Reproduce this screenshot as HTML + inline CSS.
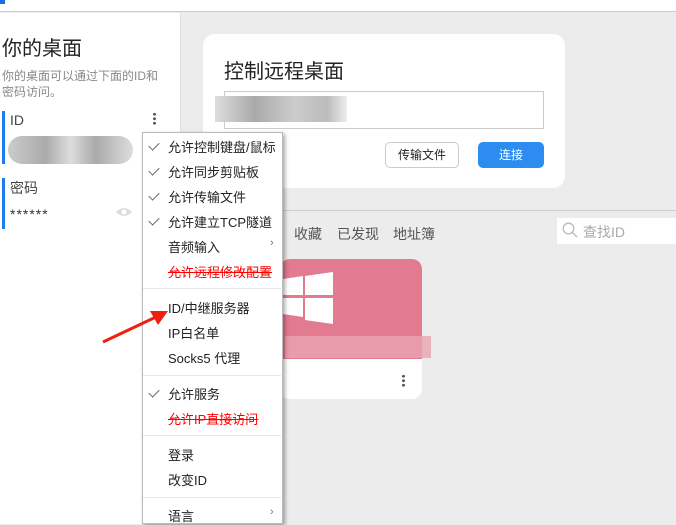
<html><head><style>
body{margin:0;width:676px;height:524px;overflow:hidden;background:#ececec;font-family:"Liberation Sans","Noto Sans CJK SC",sans-serif;position:relative}
div{position:absolute;box-sizing:border-box}
.t{white-space:nowrap}
.mi{left:25px;font-size:13px;color:#222}
.ck{left:6px;width:10px;height:6px;border-left:1.3px solid #666;border-bottom:1.3px solid #666;transform:rotate(-45deg)}
.sep{left:0;width:138px;height:1px;background:#e6e6e6}
</style></head><body>
<div style="left:0;top:0;width:676px;height:12px;background:#fff;border-bottom:1px solid #ccc"></div>
<div style="left:0;top:0;width:5px;height:4px;background:#1a6fe0"></div>
<div style="left:0;top:13px;width:181px;height:511px;background:#fff;border-right:1px solid #ddd"></div>
<div class="t" style="left:2px;top:32px;font-size:20px;color:#222">你的桌面</div>
<div style="left:2px;top:68px;font-size:12px;color:#888;line-height:16px;width:162px">你的桌面可以通过下面的ID和密码访问。</div>
<div style="left:2px;top:111px;width:3px;height:53px;background:#1e7cf0"></div>
<div class="t" style="left:10px;top:112px;font-size:14px;color:#444">ID</div>
<div style="left:153px;top:112px;width:3px;height:13px;background:radial-gradient(circle,#555 1.3px,transparent 1.6px) 0 0/3px 4.5px"></div>
<div style="left:8px;top:136px;width:125px;height:28px;border-radius:14px;background:linear-gradient(90deg,#ccc,#aaa 30%,#ddd 50%,#aaa 70%,#ddd)"></div>
<div style="left:2px;top:178px;width:3px;height:51px;background:#1e7cf0"></div>
<div class="t" style="left:10px;top:178px;font-size:14px;color:#444">密码</div>
<div class="t" style="left:10px;top:206px;font-size:14px;color:#333;letter-spacing:1px">******</div>
<svg style="position:absolute;left:115px;top:206px" width="18" height="12"><path d="M1 6Q9 -2 17 6Q9 14 1 6Z" fill="#ddd"/><circle cx="9" cy="6" r="2.5" fill="#fff"/></svg>
<div style="left:203px;top:34px;width:362px;height:154px;background:#fff;border-radius:12px"></div>
<div class="t" style="left:224px;top:55px;font-size:20px;color:#222">控制远程桌面</div>
<div style="left:224px;top:91px;width:320px;height:38px;border:1px solid #ccc;background:#fff"></div>
<div style="left:215px;top:96px;width:132px;height:26px;background:linear-gradient(90deg,#ddd,#aaa 30%,#ccc 60%,#bbb 85%,#eee)"></div>
<div style="left:385px;top:142px;width:74px;height:26px;border:1px solid #ccc;border-radius:5px;font-size:12px;text-align:center;line-height:24px;color:#222">传输文件</div>
<div style="left:478px;top:142px;width:66px;height:26px;background:#2d8cf0;border-radius:5px;font-size:12px;text-align:center;line-height:26px;color:#fff">连接</div>
<div style="left:182px;top:210px;width:494px;height:1px;background:#ccc"></div>
<div class="t" style="left:294px;top:224px;font-size:14px;color:#555">收藏</div>
<div class="t" style="left:337px;top:224px;font-size:14px;color:#555">已发现</div>
<div class="t" style="left:393px;top:224px;font-size:14px;color:#555">地址簿</div>
<div style="left:557px;top:218px;width:119px;height:26px;background:#fff"></div>
<svg style="position:absolute;left:562px;top:222px" width="16" height="16"><circle cx="6.5" cy="6.5" r="5.3" fill="none" stroke="#bbb" stroke-width="1.3"/><path d="M10.5 10.5L15 15" stroke="#bbb" stroke-width="1.3"/></svg>
<div class="t" style="left:583px;top:222px;font-size:14px;color:#aaa">查找ID</div>
<div style="left:280px;top:259px;width:142px;height:140px;background:#fff;border-radius:10px;overflow:hidden"><div style="left:0;top:0;width:142px;height:100px;background:#e37b90"></div></div>
<svg style="position:absolute;left:283px;top:272px" width="50" height="52"><path d="M0 7L20 4V23H0ZM22 4L50 0V23H22ZM0 26H20V45L0 42ZM22 26H50V52L22 48Z" fill="#fff"/></svg>
<div style="left:285px;top:336px;width:146px;height:22px;background:#e9a4b2;opacity:.8"></div>
<div style="left:402px;top:374px;width:3px;height:13px;background:radial-gradient(circle,#555 1.3px,transparent 1.6px) 0 0/3px 4.5px"></div>
<div style="left:142px;top:132px;width:141px;height:392px;background:#fff;border:1px solid #bbb;box-shadow:2px 2px 4px rgba(0,0,0,.35)">
<div class="ck" style="top:9px"></div><div class="t mi" style="top:4px">允许控制键盘/鼠标</div>
<div class="ck" style="top:34px"></div><div class="t mi" style="top:29px">允许同步剪贴板</div>
<div class="ck" style="top:59px"></div><div class="t mi" style="top:54px">允许传输文件</div>
<div class="ck" style="top:84px"></div><div class="t mi" style="top:79px">允许建立TCP隧道</div>
<div class="t mi" style="top:104px">音频输入</div><div class="t" style="left:127px;top:104px;font-size:11px;color:#777">›</div>
<div class="t mi" style="top:129px;color:#f00;text-decoration:line-through">允许远程修改配置</div>
<div class="sep" style="top:155px"></div>
<div class="t mi" style="top:165px">ID/中继服务器</div>
<div class="t mi" style="top:190px">IP白名单</div>
<div class="t mi" style="top:215px">Socks5 代理</div>
<div class="sep" style="top:242px"></div>
<div class="ck" style="top:256px"></div><div class="t mi" style="top:251px">允许服务</div>
<div class="t mi" style="top:276px;color:#f00;text-decoration:line-through">允许IP直接访问</div>
<div class="sep" style="top:302px"></div>
<div class="t mi" style="top:312px">登录</div>
<div class="t mi" style="top:337px">改变ID</div>
<div class="sep" style="top:364px"></div>
<div class="t mi" style="top:373px">语言</div><div class="t" style="left:127px;top:373px;font-size:11px;color:#777">›</div>
</div>
<svg style="position:absolute;left:100px;top:305px" width="70" height="40"><path d="M3 37L58 11" stroke="#f02010" stroke-width="3"/><path d="M68 6L50 6L58 20Z" fill="#f02010"/></svg>
</body></html>
